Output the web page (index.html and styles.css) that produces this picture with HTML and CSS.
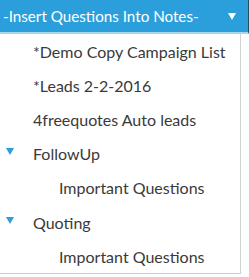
FILE: index.html
```html
<!DOCTYPE html>
<html lang="en">
<head>
    <meta charset="UTF-8">
    <title>Insert Questions Into Notes</title>
    <link rel="stylesheet" href="styles.css">
</head>
<body>
    <div class="dropdown">
        <div class="dropdown-head">
            <span class="dropdown-title">-Insert Questions Into Notes-</span>
            <span class="dropdown-caret"></span>
        </div>
        <ul class="menu">
            <li class="menu-item">*Demo Copy Campaign List</li>
            <li class="menu-item">*Leads 2-2-2016</li>
            <li class="menu-item">4freequotes Auto leads</li>
            <li class="menu-item group"><span class="toggle"></span>FollowUp</li>
            <li class="menu-item child">Important Questions</li>
            <li class="menu-item group"><span class="toggle"></span>Quoting</li>
            <li class="menu-item child">Important Questions</li>
        </ul>
    </div>
</body>
</html>
```
FILE: styles.css
```css
body {
    margin: 0;
    background: #fdfdfd;
    font-family: Lato, "Open Sans", sans-serif;
}
.dropdown {
    width: 249px;
}
.dropdown-head {
    display: flex;
    align-items: center;
    justify-content: space-between;
    height: 32px;
    padding: 0 12px 0 3px;
    background: #2b9fdc;
    border-right: 1px solid #2a4a5c;
    border-bottom: 2px solid #a8d5f0;
    color: #fff;
}
.dropdown-title {
    font-size: 15.2px;
}
.dropdown-caret {
    width: 0;
    height: 0;
    border-left: 4px solid transparent;
    border-right: 4px solid transparent;
    border-top: 7px solid #fff;
}
.menu {
    list-style: none;
    margin: 0;
    padding: 0;
    width: 241px;
    background: #fff;
    border-right: 1px solid #d3d3d3;
    border-bottom: 1px solid #c9ccd3;
    box-sizing: border-box;
}
.menu-item {
    display: flex;
    align-items: center;
    height: 34.2px;
    padding-left: 33px;
    color: #3a3a3a;
    font-size: 16px;
}
.menu-item.group {
    padding-left: 6px;
}
.menu-item.child {
    padding-left: 59px;
}
.toggle {
    width: 0;
    height: 0;
    margin-right: 19px;
    margin-top: -4px;
    border-left: 4px solid transparent;
    border-right: 4px solid transparent;
    border-top: 7px solid #2b9fdc;
}
```
